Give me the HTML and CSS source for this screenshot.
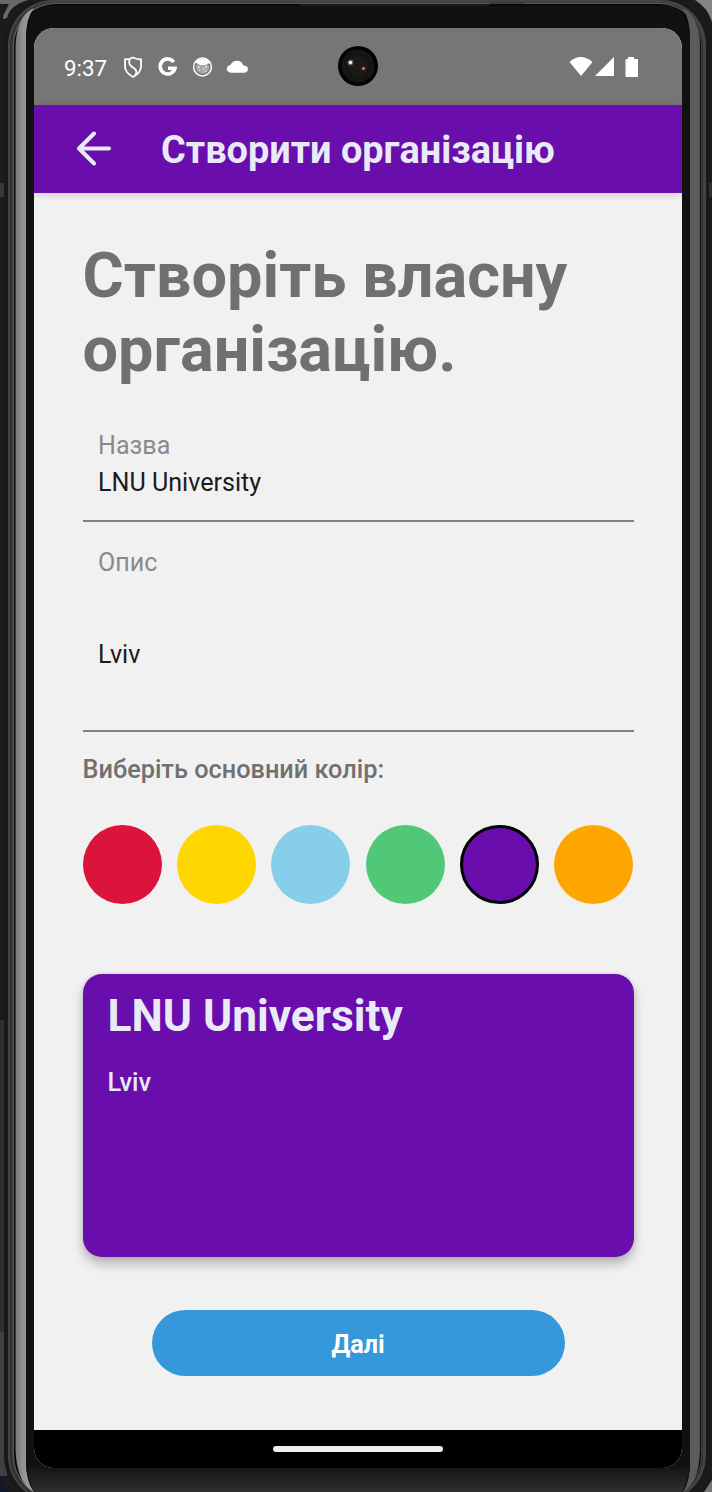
FILE: index.html
```html
<!DOCTYPE html>
<html lang="uk">
<head>
<meta charset="utf-8">
<title>Створити організацію</title>
<link rel="stylesheet" href="styles.css">
</head>
<body>
<div class="device">
  <svg class="frame" width="712" height="1492" viewBox="0 0 712 1492" aria-hidden="true">
    <defs>
      <linearGradient id="edge" x1="0" x2="1" y1="0" y2="0"><stop offset="0" stop-color="#777"/><stop offset=".4" stop-color="#929292"/><stop offset="1" stop-color="#a0a0a0"/></linearGradient>
      <linearGradient id="chin" x1="0" x2="0" y1="0" y2="1"><stop offset="0" stop-color="#151515"/><stop offset="1" stop-color="#303030"/></linearGradient>
    </defs>
    <rect width="712" height="1492" fill="#1b1b1b"/>
    <path d="M0 0H28Q10 5 7 18L0 20Z" fill="#686868"/>
    <path d="M0 4H9L3 16V24H0Z" fill="#1c1c1c"/>
    <path d="M695 0H712V22Q708 8 695 0Z" fill="#858585"/>
    <path d="M0 183H6V197H0Z" fill="#383838"/>
    <path d="M0 1020H7V1332H0Z" fill="#303030"/>
    <path d="M0 1332H7V1476H0Z" fill="#414141"/>
    <path d="M706 183H712V197H706Z" fill="#303030"/>
    <path d="M0 1476L8 1492H0Z" fill="#11182a"/>
    <path d="M712 1480L704 1492H712Z" fill="#777"/>
    <rect x="4" y="-2" width="705" height="1506" rx="48" fill="#191919"/>
    <rect x="8" y="0" width="698" height="1501" rx="45" fill="#444"/>
    <rect x="10" y="2" width="693" height="1498" rx="44" fill="#303030"/>
    <rect x="12.500" y="2.500" width="689" height="1496" rx="43" fill="#555"/>
    <rect x="14" y="4" width="687" height="1494" rx="42" fill="#090909"/>
    <path d="M15.500 1450V46Q17 15 34 8Q26 18 26 38V1462Q26 1480 34 1492Q17 1484 15.500 1450Z" fill="url(#edge)"/>
    <path d="M700 1450V46Q699 15 682 8Q690 18 690 38V1462Q690 1480 683 1492Q699 1484 700 1450Z" fill="#5b5b5b"/>
    <path d="M26 40Q27 7 48 6H668Q689 7 690 40V1462Q690 1480 683 1492H34Q26 1480 26 1462Z" fill="#111"/>
    <path d="M28 1468H689Q687 1482 682 1492H34Q29 1482 28 1468Z" fill="url(#chin)"/>
    <path d="M525 3H492L488 5H300" fill="none" stroke="#2c2c2c"/>
  </svg>
  <main class="screen">
    <header class="status">
      <span class="time">9:37</span>
      <svg class="notices" width="190" height="26" viewBox="0 0 190 26">
        <g fill="none" stroke="#fff" stroke-width="1.800">
          <path d="M10 3.500Q14 5.500 18 5.500V13Q17.500 19 10 23Q2.500 19 2 13V5.500Q6 5.500 10 3.500Z"/>
          <path d="M7 5Q5 9 8 12L12 15Q15 18 11.500 22"/>
        </g>
        <path d="M50.800 8A7.500 7.500 0 1 0 52 14.300H45" fill="none" stroke="#fff" stroke-width="3.600"/>
        <circle cx="79.500" cy="13" r="8.900" fill="none" stroke="#fff" stroke-width="1.500"/>
        <path d="M72 8Q74 5 79.500 5Q85 5 87 8Q86 10.500 85 9.500L83 11H77L74 9.500Z" fill="#fff"/>
        <path d="M74 10L77 11H83L85 10Q88 14 84 18Q79.500 21.500 75 18Q71 14 74 10Z" fill="#a9a9a9"/>
        <path d="M75 13h2M82 13h2M76 16h1M80 15h1M82 17h1" stroke="#fff" stroke-width="1"/>
        <path d="M108 18.700Q104 18.300 103.800 15Q104 11.500 107.500 11Q109.500 6.800 114 6.800Q119 7 120.300 11.500Q125 11.700 125 15.300Q124.500 18.700 121 18.700Z" fill="#fff"/>
      </svg>
      <svg class="camera" width="40" height="40" viewBox="0 0 40 40">
        <circle cx="20" cy="20" r="20" fill="#030303"/><circle cx="20" cy="20" r="16.500" fill="#151515"/><circle cx="20" cy="20" r="10" fill="#1d1918"/>
        <circle cx="12.500" cy="16.500" r="3" fill="#556"/><circle cx="12.500" cy="16.500" r="1.700" fill="#eef2f2"/>
        <circle cx="25.500" cy="22.500" r="2.200" fill="#63301d"/><circle cx="25.500" cy="22.500" r="1" fill="#f2b49a"/>
      </svg>
      <svg class="signals" width="72" height="24" viewBox="0 0 72 24" fill="#fff">
        <path d="M1.500 7Q12.500-3 24.500 7L13 21Z"/><path d="M27 21L46 2V21Z"/><path d="M60 2H66V4H69.500Q70 4 70 4.500V21Q70 22 69 22H58.500Q57.500 22 57.500 21V5Q57.500 4 58.500 4H60Z"/>
      </svg>
    </header>
    <div class="appbar">
      <svg class="back" width="36" height="36" viewBox="0 0 36 36" fill="none" stroke="#e8eaf6" stroke-width="4" stroke-linecap="round" stroke-linejoin="round"><path d="M19 3.500L4 18.500L19 33.500M4 18.500H34"/></svg>
      <span>Створити організацію</span>
    </div>
    <section class="content">
      <h1>Створіть власну організацію.</h1>
      <div class="field name"><label>Назва</label><span class="value">LNU University</span></div>
      <div class="field about"><label>Опис</label><span class="value">Lviv</span></div>
      <p class="prompt">Виберіть основний колір:</p>
      <div class="colors">
        <i class="crimson"></i><i class="gold"></i><i class="sky"></i><i class="green"></i><i class="purple"></i><i class="orange"></i>
      </div>
      <article class="card"><h2>LNU University</h2><p>Lviv</p></article>
      <button class="next">Далі</button>
    </section>
    <footer class="nav"><i></i></footer>
  </main>
</div>
</body>
</html>
```
FILE: styles.css
```css
* { box-sizing: border-box; }
body, h1, h2, p { margin: 0; }
body { font-family: Roboto, "Noto Sans", sans-serif; background: #1b1b1b; overflow: hidden; }
.device { position: relative; width: 712px; height: 1492px; padding: 28px 30px 24px 34px; }
.frame { position: absolute; inset: 0; }
.screen { position: relative; display: flex; flex-direction: column; width: 648px; height: 1440px; border-radius: 20px; overflow: hidden; background: #f1f1f1; }
.status { position: relative; display: flex; align-items: center; height: 77px; padding: 0 42px 0 30px; background: #767676; }
.time { width: 58px; font-size: 22.3px; line-height: 26px; color: #fff; padding-top: 2px; }
.notices { margin-left: 1px; }
.camera { position: absolute; left: 304px; top: 18px; }
.signals { margin-left: auto; }
.appbar { position: relative; display: flex; align-items: center; height: 88px; padding-left: 41px; gap: 50px; background: #6a0dad; color: #e8eaf6; font-size: 37.9px; font-weight: 700; box-shadow: 0 2px 7px rgba(0,0,0,.14); }
.appbar span { line-height: 44px; padding-top: 1px; }
.back { margin-top: -2px; }
.content { display: flex; flex-direction: column; height: 1237px; padding: 46px 48.5px 0; font-size: 25.1px; line-height: 30px; }
h1 { font-size: 63px; line-height: 74px; font-weight: 700; color: #707070; }
.field { display: flex; flex-direction: column; padding-left: 15.5px; border-bottom: 2px solid #808080; }
.field label { color: #8a8a8a; }
.field .value { color: #1b1b1b; }
.name { height: 91px; margin-top: 43.5px; gap: 7px; }
.about { height: 184px; margin-top: 26px; gap: 62px; }
.prompt { margin-top: 23.5px; font-size: 25.3px; font-weight: 500; color: #707070; }
.colors { display: flex; justify-content: space-between; margin-top: 40px; }
.colors i { width: 79px; height: 79px; border-radius: 50%; }
.crimson { background: #dc143c; }
.gold { background: #ffd700; }
.sky { background: #87ceeb; }
.green { background: #50c878; }
.purple { background: #6a0dad; border: 3px solid #000; }
.orange { background: #ffa500; }
.card { height: 283px; margin-top: 70px; padding: 16px 25px; border-radius: 19px; background: #6a0dad; color: #e8eaf6; box-shadow: 0 7px 11px rgba(0,0,0,.25), 0 0 4px rgba(0,0,0,.1); }
.card h2 { font-size: 44.3px; line-height: 52px; font-weight: 700; }
.card p { margin-top: 26px; font-size: 25.3px; font-weight: 500; }
.next { align-self: center; width: 413px; height: 66px; margin-top: 53px; padding: 3px 0 0; border: 0; border-radius: 33px; background: #3498db; color: #fff; font: 700 25.2px/30px Roboto, "Noto Sans", sans-serif; }
.nav { display: flex; justify-content: center; align-items: center; height: 38px; background: #000; }
.nav i { width: 170px; height: 6px; border-radius: 3px; background: #f0f0f0; }
```
